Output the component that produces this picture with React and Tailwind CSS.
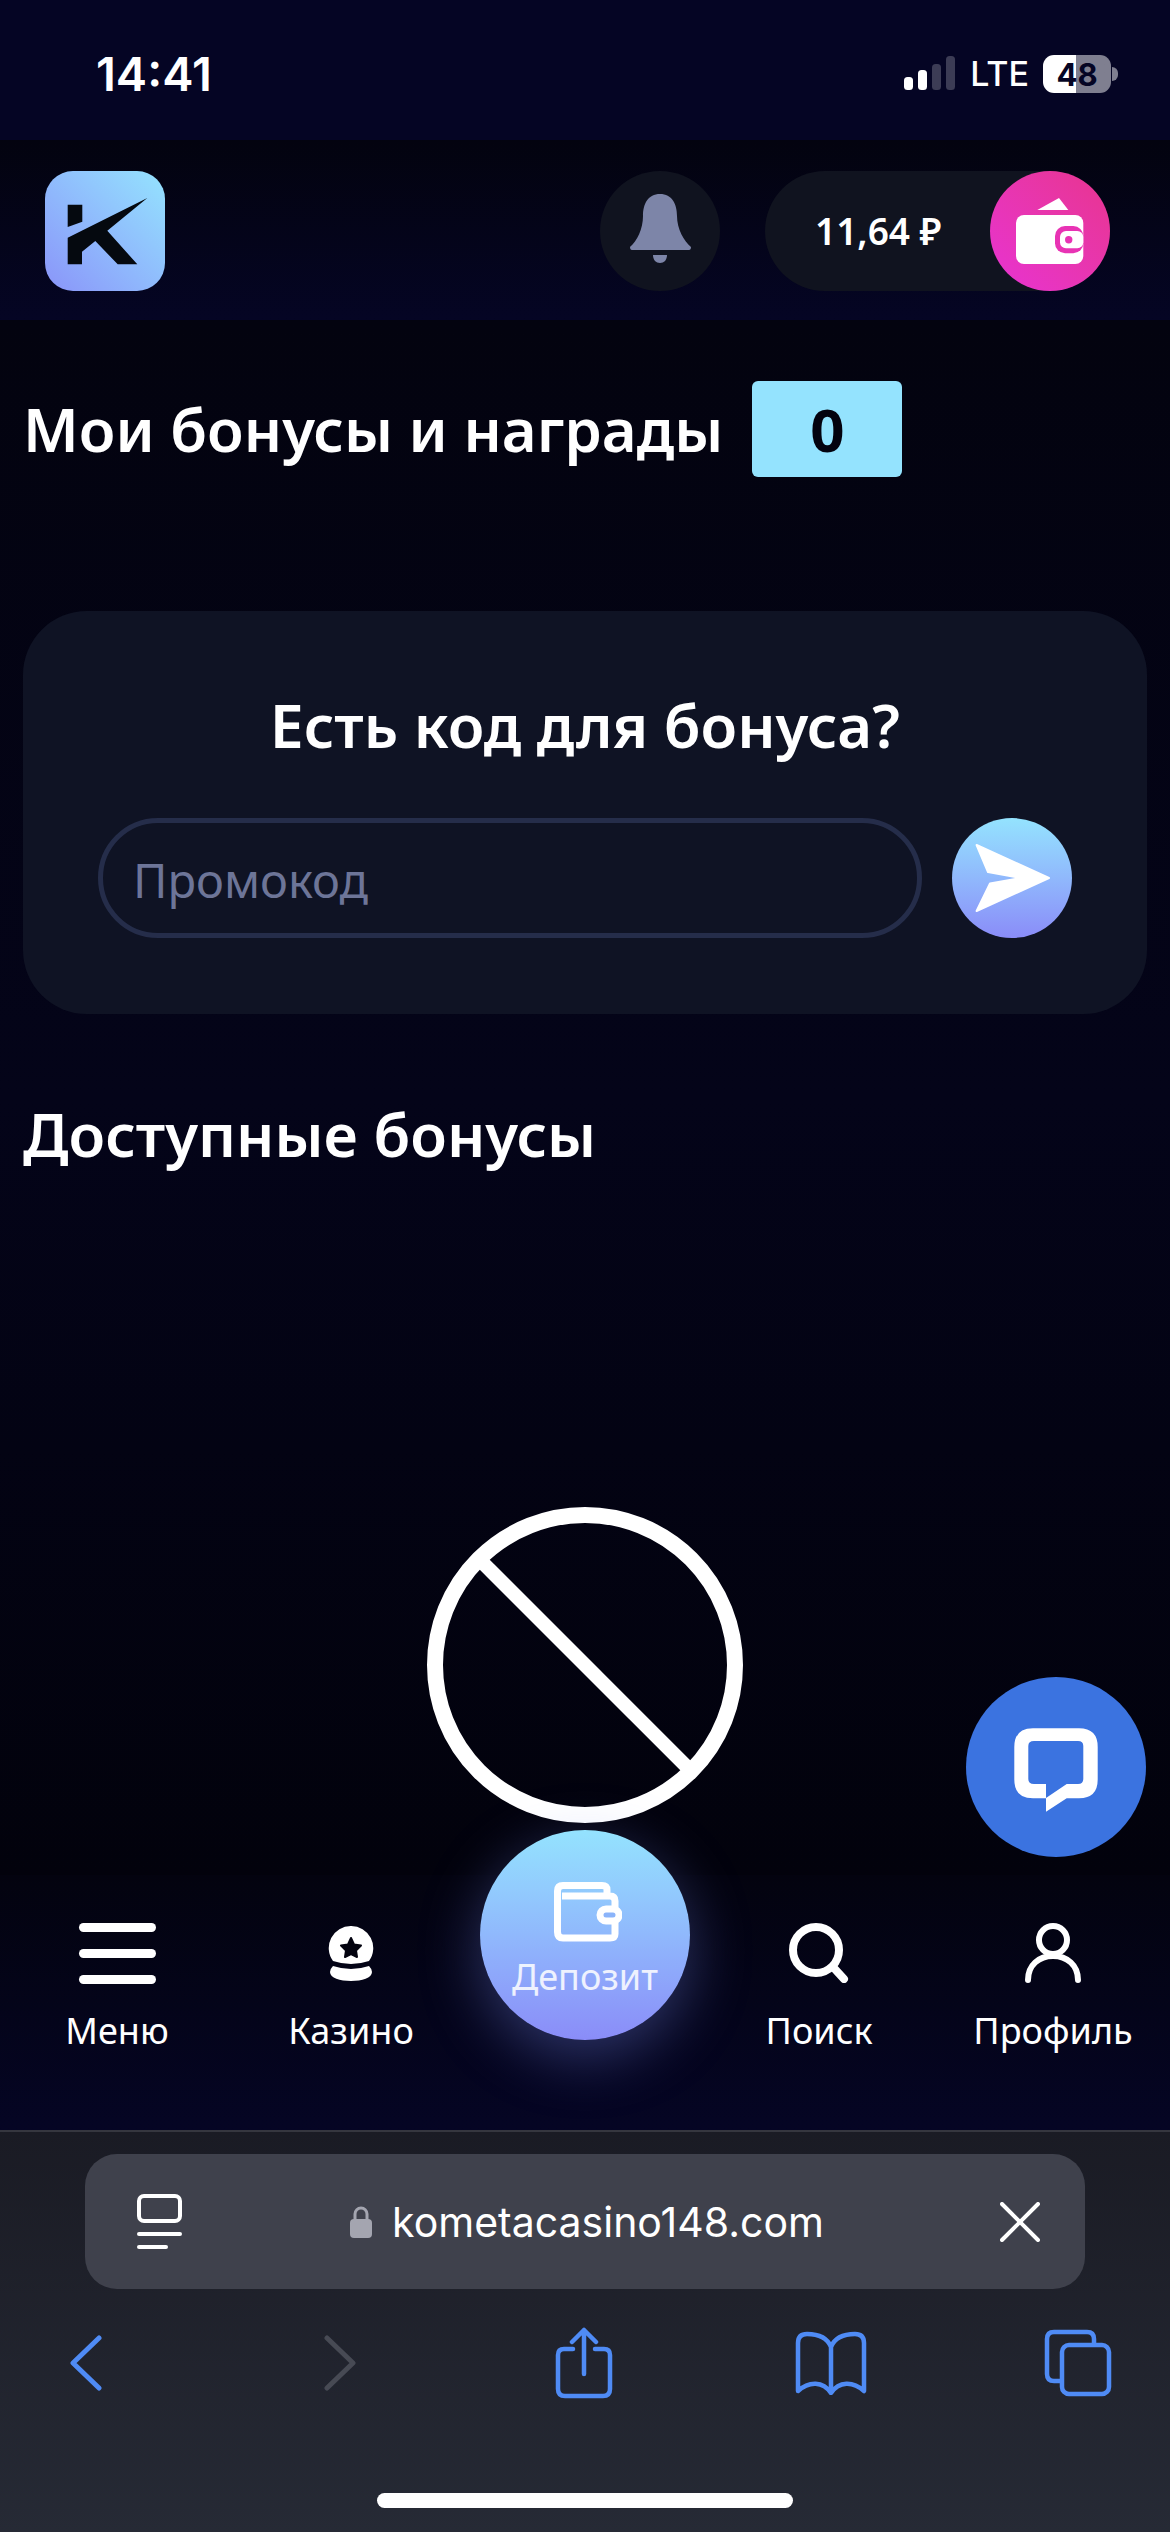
const mainFont = "font-['Noto_Sans',sans-serif]";

function Logo() {
  return (
    <div className="w-[120px] h-[120px] rounded-[28px] bg-linear-to-tr from-[#8a94f9] to-[#94e3fe]">
      <svg width="120" height="120" viewBox="0 0 120 120" fill="#05090f">
        <polygon points="22.7,33.7 37.3,33.7 37.3,50.7 22.7,56" />
        <polygon points="22.7,66.7 102.3,27 62.3,59.7 92.3,93.3 72.7,93.3 50.3,70 37,80.7 37,93.3 22.7,93.3" />
      </svg>
    </div>
  );
}

function Bell() {
  return (
    <div className="w-[120px] h-[120px] rounded-full bg-[#10131f]">
      <svg width="120" height="120" viewBox="0 0 120 120" fill="#7d85a8">
        <path d="M60 23C72 23 77 33 77 45C77 58 84 70 91 76Q91 79 89 79L32 79Q30 79 30 76C37 70 43 58 43 45C43 33 48 23 60 23Z" />
        <path d="M53 84h14c0 5-3 8-7 8s-7-3-7-8z" />
      </svg>
    </div>
  );
}

function PinkWallet() {
  return (
    <div className="w-[120px] h-[120px] rounded-full bg-linear-to-bl from-[#e8348e] to-[#e832d2]">
      <svg width="120" height="120" viewBox="0 0 120 120">
        <path d="M47.3 39L69 27L78.3 39Z" fill="#fff" />
        <rect x="26" y="44" width="67.3" height="49" rx="8" fill="#fff" />
        <rect x="65" y="55" width="28.3" height="27.3" rx="10" fill="#e833b4" />
        <rect x="70" y="60" width="23.3" height="17.3" rx="6" fill="#fff" />
        <circle cx="78.7" cy="68.7" r="3.7" fill="#e833b4" />
      </svg>
    </div>
  );
}

function NavItem({ label, children }) {
  return (
    <div className="flex flex-col items-center">
      <div className="h-[60px] flex items-center justify-center">{children}</div>
      <span className="mt-[26px] text-[36px] leading-[44px] text-white">{label}</span>
    </div>
  );
}

export default function App() {
  return (
    <div className={`relative w-full h-[2532px] overflow-hidden flex flex-col bg-[#03030f] ${mainFont}`}>
      {/* status bar */}
      <div className="h-[140px] shrink-0 bg-[#050524] flex items-start justify-between font-['Inter',sans-serif] text-white">
        <span className="ml-[96px] mt-[46px] text-[47px] leading-[56px] font-semibold">14:41</span>
        <div className="mt-[55px] mr-[59px] flex items-center">
          <svg width="52" height="36" viewBox="0 0 52 36">
            <rect x="0" y="21" width="9" height="13" rx="3.5" fill="#fff" />
            <rect x="14" y="14" width="9" height="20" rx="3.5" fill="#fff" />
            <rect x="28" y="8" width="9" height="26" rx="3.5" fill="#3c3c55" />
            <rect x="42" y="0" width="9" height="34" rx="3.5" fill="#3c3c55" />
          </svg>
          <span className="ml-[14px] text-[34px] leading-[38px] font-medium">LTE</span>
          <div className="relative ml-[14px] w-[68px] h-[38px] rounded-[11px] bg-linear-to-r from-white from-[48%] to-[#7f7f90] to-[48%] flex items-center justify-center">
            <span className="text-[31px] leading-none font-bold text-[#050524]">48</span>
            <div className="absolute -right-[7px] top-[12px] w-[6px] h-[14px] rounded-r-full bg-[#7f7f90]" />
          </div>
        </div>
      </div>

      {/* header */}
      <header className="h-[180px] shrink-0 bg-linear-to-b from-[#03030f] to-[#050524] pt-[31px] pl-[45px] pr-[60px] flex items-start justify-between">
        <Logo />
        <div className="flex gap-[45px]">
          <Bell />
          <div className="w-[345px] h-[120px] rounded-full bg-[#10131f] flex items-center justify-between">
            <span className="ml-[50px] text-[37px] font-semibold text-white">11,64 ₽</span>
            <PinkWallet />
          </div>
        </div>
      </header>

      {/* content */}
      <main className="flex-1 min-h-0 px-[23px] bg-linear-to-b from-[#03030f] via-[#040419] to-[#02020c]">
        <div className="mt-[61px] flex items-center gap-[29px]">
          <h1 className="text-[60px] leading-[96px] font-semibold text-white">Мои бонусы и награды</h1>
          <div className="w-[150px] h-[96px] rounded-[6px] bg-[#94e3fe] flex items-center justify-center text-[60px] font-bold text-[#03030f]">0</div>
        </div>

        <section className="mt-[134px] h-[403px] rounded-[64px] bg-[#0f1324] px-[75px] pt-[76px]">
          <h2 className="text-center text-[60px] leading-[76px] font-semibold text-white">Есть код для бонуса?</h2>
          <div className="mt-[55px] flex gap-[30px]">
            <div className="w-[825px] h-[120px] rounded-full border-[5px] border-[#252d4a] flex items-center pl-[30px] pt-[4px]">
              <span className="text-[47px] text-[#6d7598]">Промокод</span>
            </div>
            <div className="w-[120px] h-[120px] rounded-full bg-linear-to-b from-[#94e3fe] to-[#8a8cf8]">
              <svg width="120" height="120" viewBox="0 0 120 120">
                <path d="M24.6 27L36 54L69 60L38 65.5L24.6 93L97 60Z" fill="#fff" stroke="#fff" strokeWidth="2" strokeLinejoin="round" />
              </svg>
            </div>
          </div>
        </section>

        <h2 className="mt-[82px] text-[60px] leading-[76px] font-semibold text-white">Доступные бонусы</h2>

        <div className="mt-[335px] flex justify-center">
          <svg width="316" height="316" viewBox="0 0 316 316" fill="none" stroke="#fff">
            <circle cx="158" cy="158" r="150" strokeWidth="16" />
            <line x1="52" y1="52" x2="264" y2="264" strokeWidth="14" />
          </svg>
        </div>
      </main>

      {/* chat button */}
      <div className="absolute left-[966px] top-[1677px] w-[180px] h-[180px] rounded-full bg-[#3b73e0]">
        <svg width="180" height="180" viewBox="0 0 180 180">
          <path
            fillRule="evenodd"
            fill="#fff"
            d="M67 51.3H113Q131.7 51.3 131.7 70V102.6Q131.7 121.3 113 121.3H100.7L80 134.7V121.3H67Q48.3 121.3 48.3 102.6V70Q48.3 51.3 67 51.3ZM68 64Q62.3 64 62.3 69V102Q62.3 107 68 107H80V121L100.7 107H112Q117.3 107 117.3 102V69Q117.3 64 112 64Z"
          />
        </svg>
      </div>

      {/* bottom nav */}
      <nav className="relative h-[255px] shrink-0 bg-linear-to-b from-[#03030f] to-[#050524] grid grid-cols-5 pt-[48px]">
        <NavItem label="Меню">
          <div className="flex flex-col gap-[17px]">
            <div className="w-[77px] h-[9px] rounded-full bg-white" />
            <div className="w-[77px] h-[9px] rounded-full bg-white" />
            <div className="w-[77px] h-[9px] rounded-full bg-white" />
          </div>
        </NavItem>
        <NavItem label="Казино">
          <svg width="50" height="58" viewBox="0 0 50 58" fill="#fff">
            <path d="M25 2a22 22 0 0 1 18 35q-18 6-36 0a22 22 0 0 1 18-35z" />
            <path d="M7 42q18 6 36 0q3 3 3 6c0 6-10 9-21 9s-21-3-21-9q0-3 3-6z" />
            <polygon points="25,14 28,20.5 35,21.5 30,26.5 31,33 25,30 19,33 20,26.5 15,21.5 22,20.5" fill="#03030f" stroke="#03030f" strokeWidth="2" strokeLinejoin="round" />
          </svg>
        </NavItem>
        <div />
        <NavItem label="Поиск">
          <svg width="60" height="60" viewBox="0 0 60 60" fill="none" stroke="#fff" strokeWidth="8" strokeLinecap="round">
            <circle cx="27" cy="27" r="23" />
            <line x1="44" y1="44" x2="55" y2="56" />
          </svg>
        </NavItem>
        <NavItem label="Профиль">
          <svg width="56" height="60" viewBox="0 0 56 60" fill="none" stroke="#fff" strokeWidth="6" strokeLinecap="round">
            <circle cx="28" cy="17" r="14" />
            <path d="M3 57C3 42 14 33 28 33S53 42 53 57" />
          </svg>
        </NavItem>

        {/* deposit button sits over the nav */}
        <div className="absolute left-[480px] -top-[45px] w-[210px] h-[210px] rounded-full bg-linear-to-b from-[#94e3fe] to-[#8a8cf8] shadow-[0_16px_60px_rgba(125,145,255,0.35)] flex flex-col items-center pt-[52px]">
          <svg className="ml-[6px]" width="68" height="60" viewBox="0 0 68 60" fill="none" stroke="#fff" strokeWidth="7">
            <path d="M53 14V8Q53 3.5 48 3.5H9Q3.5 3.5 3.5 9V50Q3.5 56 9 56H56Q61 56 61 52V19Q61 14 56 14H8" />
            <rect x="46" y="27" width="19" height="12" rx="6" fill="#8bb4fa" />
          </svg>
          <span className="mt-[15px] text-[36px] leading-[40px] text-white/85">Депозит</span>
        </div>
      </nav>

      {/* safari chrome */}
      <div className="h-[402px] shrink-0 border-t-2 border-[#35363f] bg-linear-to-b from-[#1a1b24] to-[#262a35] pt-[22px] relative">
        <div className="mx-[85px] h-[135px] rounded-[32px] bg-[#3f414c] flex items-center justify-between pl-[52px] pr-[45px]">
          <div className="flex flex-col items-start">
            <div className="w-[45px] h-[29px] rounded-[7px] border-[4px] border-white" />
            <div className="mt-[9px] w-[45px] h-[4px] rounded-full bg-white" />
            <div className="mt-[9px] w-[31px] h-[4px] rounded-full bg-white" />
          </div>
          <div className="flex items-center gap-[20px] -ml-[8px] font-['Inter',sans-serif]">
            <svg width="22" height="32" viewBox="0 0 22 32">
              <path d="M5 14V8a6 6 0 0 1 12 0v6" fill="none" stroke="#a4a5b0" strokeWidth="3" />
              <rect x="0" y="13" width="22" height="19" rx="4" fill="#a4a5b0" />
            </svg>
            <span className="text-[41px] leading-[48px] text-white">kometacasino148.com</span>
          </div>
          <svg width="40" height="40" viewBox="0 0 40 40" stroke="#fff" strokeWidth="4" strokeLinecap="round">
            <line x1="2" y1="2" x2="38" y2="38" />
            <line x1="38" y1="2" x2="2" y2="38" />
          </svg>
        </div>

        <div className="mt-[38px] flex items-center h-[72px] text-[#4f8bf5]">
          <svg className="ml-[70px]" width="32" height="56" viewBox="0 0 32 56" fill="none" stroke="currentColor" strokeWidth="5" strokeLinecap="round" strokeLinejoin="round">
            <path d="M29 3L3 28L29 53" />
          </svg>
          <svg className="ml-[222px]" width="32" height="56" viewBox="0 0 32 56" fill="none" stroke="#474a54" strokeWidth="5" strokeLinecap="round" strokeLinejoin="round">
            <path d="M3 3L29 28L3 53" />
          </svg>
          <svg className="ml-[199px]" width="58" height="72" viewBox="0 0 58 72" fill="none" stroke="currentColor" strokeWidth="4.5" strokeLinecap="round" strokeLinejoin="round">
            <path d="M18 22H9Q3 22 3 28V62Q3 69 10 69H48Q55 69 55 62V28Q55 22 49 22H40" />
            <path d="M29 47V3M17 15L29 3L41 15" />
          </svg>
          <svg className="ml-[182px]" width="72" height="64" viewBox="0 0 72 64" fill="none" stroke="currentColor" strokeWidth="4.5" strokeLinejoin="round">
            <path d="M36 16C32 6 22 3 12 3Q3 3 3 12V60C14 50 28 50 36 62C44 50 58 50 69 60V12Q69 3 60 3C50 3 40 6 36 16V60" />
          </svg>
          <svg className="ml-[177px]" width="68" height="68" viewBox="0 0 68 68" fill="none" stroke="currentColor" strokeWidth="4.5">
            <path d="M17 52H10Q3 52 3 45V10Q3 3 10 3H43Q50 3 50 10V15" />
            <rect x="18" y="16" width="47" height="49" rx="7" />
          </svg>
        </div>

        <div className="absolute left-[377px] top-[361px] w-[416px] h-[15px] rounded-full bg-white" />
      </div>
    </div>
  );
}
